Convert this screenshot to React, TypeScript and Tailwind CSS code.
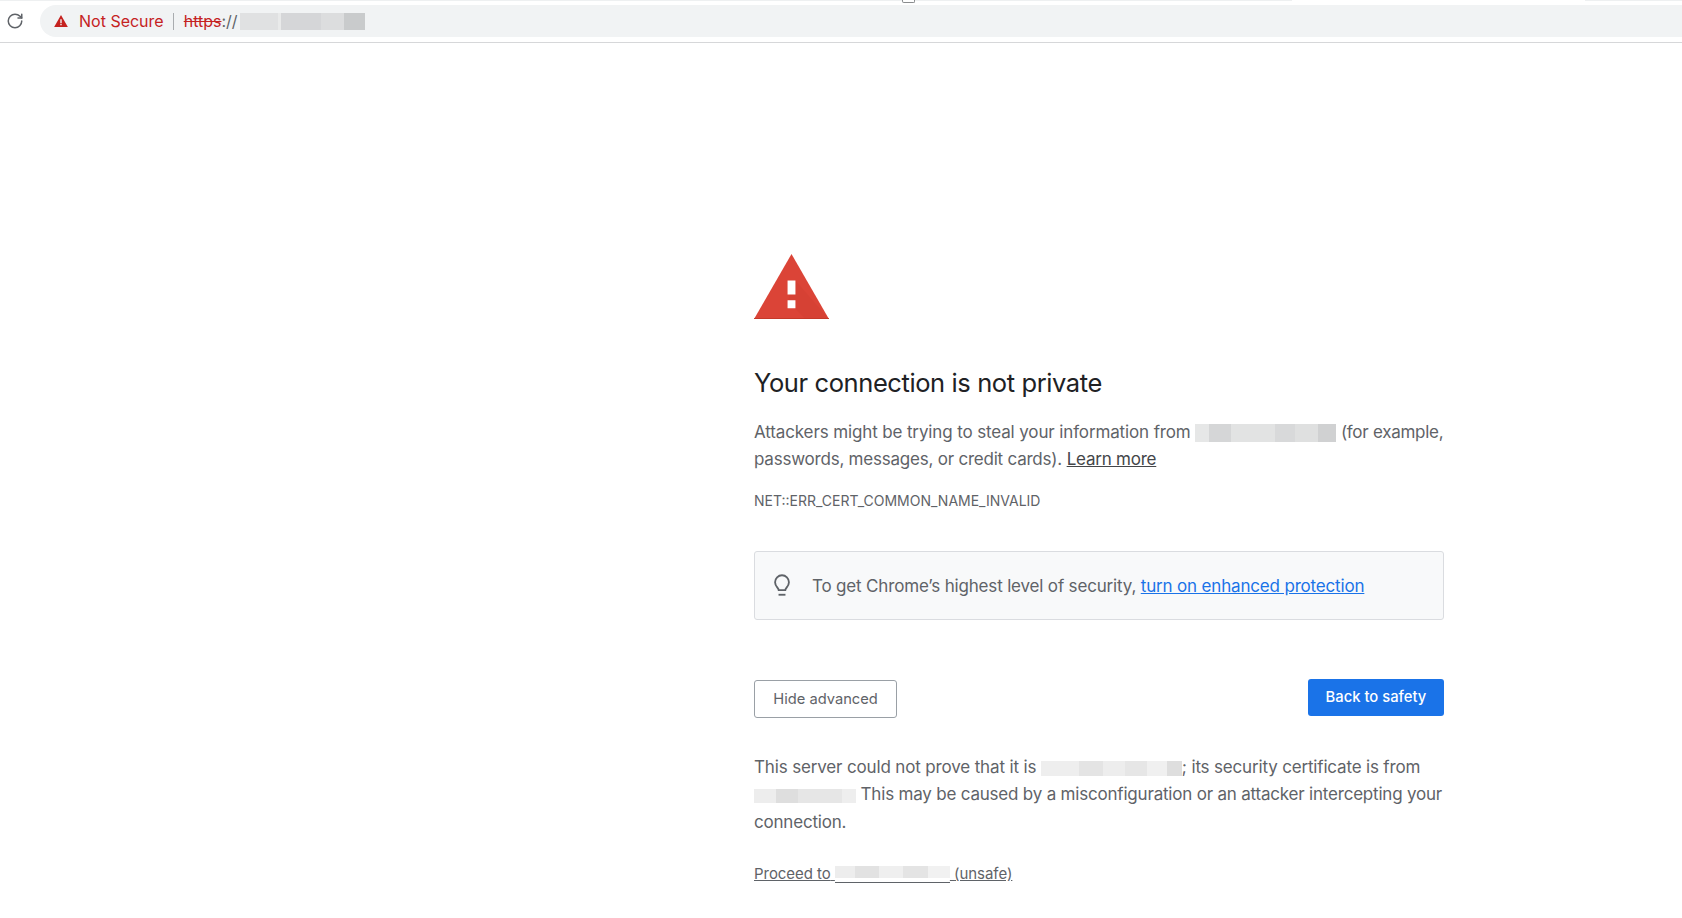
import { RotateCw } from "lucide-react";

function BlurBlock({ className, children }: { className: string; children: React.ReactNode }) {
  return <span className={`inline-flex align-middle overflow-hidden ${className}`}>{children}</span>;
}

export default function App() {
  return (
    <div className="min-h-[918px] bg-white font-['Inter','Liberation_Sans',sans-serif] text-[#5f6368] overflow-hidden">
      {/* Tab strip edge, cropped off at the top of the shot */}
      <div className="flex h-[1px]">
        <div className="w-[902px] bg-[#eef0f1]" />
        <div className="h-[3px] w-[13px] rounded-b-[2px] border-x border-b border-[#8a8c8e] bg-white" />
        <div className="w-[377px] bg-[#eef0f1]" />
        <div className="w-[293px] bg-white" />
        <div className="flex-1 bg-[#eef0f1]" />
      </div>

      {/* Toolbar */}
      <header className="flex h-[42px] items-start border-b border-[#d6d7d9] pt-[4px]">
        <div className="flex h-[32px] w-[40px] items-center pl-[6px]">
          <RotateCw className="h-[18px] w-[18px] text-[#5f6368]" strokeWidth={2} />
        </div>
        <div className="flex h-[32px] flex-1 items-center rounded-l-full bg-[#f1f3f4] pl-[14px]">
          <svg viewBox="0 0 16 14" className="h-[12px] w-[14px] shrink-0 fill-[#c5221f]">
            <path fillRule="evenodd" d="M8 0 16 14H0ZM7.2 5v4.5h1.6V5Zm0 5.5V12h1.6v-1.5Z" />
          </svg>
          <span className="ml-[11px] text-[16px] text-[#c5221f]">Not Secure</span>
          <span className="ml-[9px] h-[17px] w-px bg-[#a9acaf]" />
          <span className="ml-[10px] text-[16px] text-[#c5221f] line-through">https</span>
          <span className="text-[16px] text-[#5f6368]">://</span>
          <BlurBlock className="ml-[2px] h-[17px] w-[125px]">
            <span className="h-full w-[38px] bg-[#e0e1e2]" />
            <span className="h-full w-[3px] bg-[#e9eaea]" />
            <span className="h-full w-[40px] bg-[#d5d6d8]" />
            <span className="h-full w-[23px] bg-[#dcddde]" />
            <span className="h-full w-[21px] bg-[#c9cbcc]" />
          </BlurBlock>
        </div>
      </header>

      {/* Interstitial */}
      <main className="ml-[754px] w-[690px] pt-[211px]">
        <svg viewBox="0 0 76 66" className="h-[65px] w-[75px]">
          <path d="M38 0 76 66H0Z" fill="#db4437" />
          <path d="M42 27 76 66H52L34 48Z" fill="#c53929" opacity="0.2" />
          <path d="M0 65h76v1H0Z" fill="#c53929" />
          <path d="M34 27h8v14h-8ZM34 47h8v8h-8Z" fill="#fff" />
        </svg>

        <h1 className="mt-[48px] text-[25.5px] leading-[32px] font-normal tracking-[-0.4px] text-[#202124]">
          Your connection is not private
        </h1>

        <p className="mt-[20px] whitespace-nowrap text-[17px] leading-[27.4px] tracking-[-0.13px]">
          Attackers might be trying to steal your information from{" "}
          <BlurBlock className="h-[18px] w-[141px]">
            <span className="h-full w-[14px] bg-[#e6e7e7]" />
            <span className="h-full w-[22px] bg-[#d5d6d7]" />
            <span className="h-full w-[44px] bg-[#e2e3e3]" />
            <span className="h-full w-[20px] bg-[#d8d9da]" />
            <span className="h-full w-[23px] bg-[#dfe0e0]" />
            <span className="h-full w-[18px] bg-[#d0d1d2]" />
          </BlurBlock>{" "}
          <span className="tracking-[-0.28px]">(for example,</span>
          <br />
          <span className="tracking-[-0.22px]">passwords, messages, or credit cards).</span>{" "}
          <a className="text-[#444649] underline tracking-[-0.22px]">Learn more</a>
        </p>

        <p className="mt-[17px] text-[14px] leading-[20px]">NET::ERR_CERT_COMMON_NAME_INVALID</p>

        <div className="mt-[40px] flex h-[69px] items-center rounded-[3px] border border-[#dadce0] bg-[#f8f9fa] pl-[14px]">
          <svg viewBox="0 0 24 24" className="h-[26px] w-[26px] shrink-0 fill-none stroke-[#5f6368] stroke-[1.7]">
            <path d="M9 16.8c0-1.9-3.4-3.4-3.4-7.4a6.4 6.4 0 0 1 12.8 0c0 4-3.4 5.5-3.4 7.4Z" />
            <path d="M8.8 21h6.4" />
          </svg>
          <p className="ml-[17px] pt-[2px] text-[17px] leading-[27px] tracking-[-0.17px]">
            To get Chrome’s highest level of security,{" "}
            <a className="text-[#1a73e8] underline">turn on enhanced protection</a>
          </p>
        </div>

        <div className="mt-[59px] flex items-start justify-between">
          <button className="mt-[1px] h-[38px] w-[143px] rounded-[3px] border border-[#9aa0a6] bg-white text-[14.7px]">
            Hide advanced
          </button>
          <button className="h-[37px] w-[136px] rounded-[3px] bg-[#1a73e8] text-[14.8px] font-medium text-white">
            Back to safety
          </button>
        </div>

        <p className="mt-[36px] whitespace-nowrap text-[17px] leading-[27.6px] tracking-[-0.2px]">
          <span className="tracking-[-0.15px]">This server could not prove that it is</span>{" "}
          <BlurBlock className="h-[15px] w-[141px]">
            <span className="h-full w-[38px] bg-[#eeeeee]" />
            <span className="h-full w-[24px] bg-[#e4e4e4]" />
            <span className="h-full w-[22px] bg-[#ededed]" />
            <span className="h-full w-[22px] bg-[#e6e6e6]" />
            <span className="h-full w-[20px] bg-[#f0f0f0]" />
            <span className="h-full w-[15px] bg-[#dedede]" />
          </BlurBlock>
          <span className="tracking-[-0.17px]">; its security certificate is from</span>
          <br />
          <BlurBlock className="h-[14px] w-[102px]">
            <span className="h-full w-[22px] bg-[#ededed]" />
            <span className="h-full w-[22px] bg-[#dedede]" />
            <span className="h-full w-[44px] bg-[#e6e6e6]" />
            <span className="h-full w-[14px] bg-[#eeeeee]" />
          </BlurBlock>{" "}
          This may be caused by a misconfiguration or an attacker intercepting your
          <br />
          connection.
        </p>

        <p className="mt-[27px] text-[15px] leading-[20px] tracking-[-0.05px]">
          <a className="underline">
            Proceed to{" "}
            <BlurBlock className="h-[17px] w-[115px] border-b border-[#5f6368] pb-[4px]">
              <span className="h-full w-[20px] bg-[#ededed]" />
              <span className="h-full w-[24px] bg-[#e2e2e2]" />
              <span className="h-full w-[24px] bg-[#efefef]" />
              <span className="h-full w-[25px] bg-[#e4e4e4]" />
              <span className="h-full w-[22px] bg-[#f1f1f1]" />
            </BlurBlock>{" "}
            (unsafe)
          </a>
        </p>
      </main>
    </div>
  );
}
